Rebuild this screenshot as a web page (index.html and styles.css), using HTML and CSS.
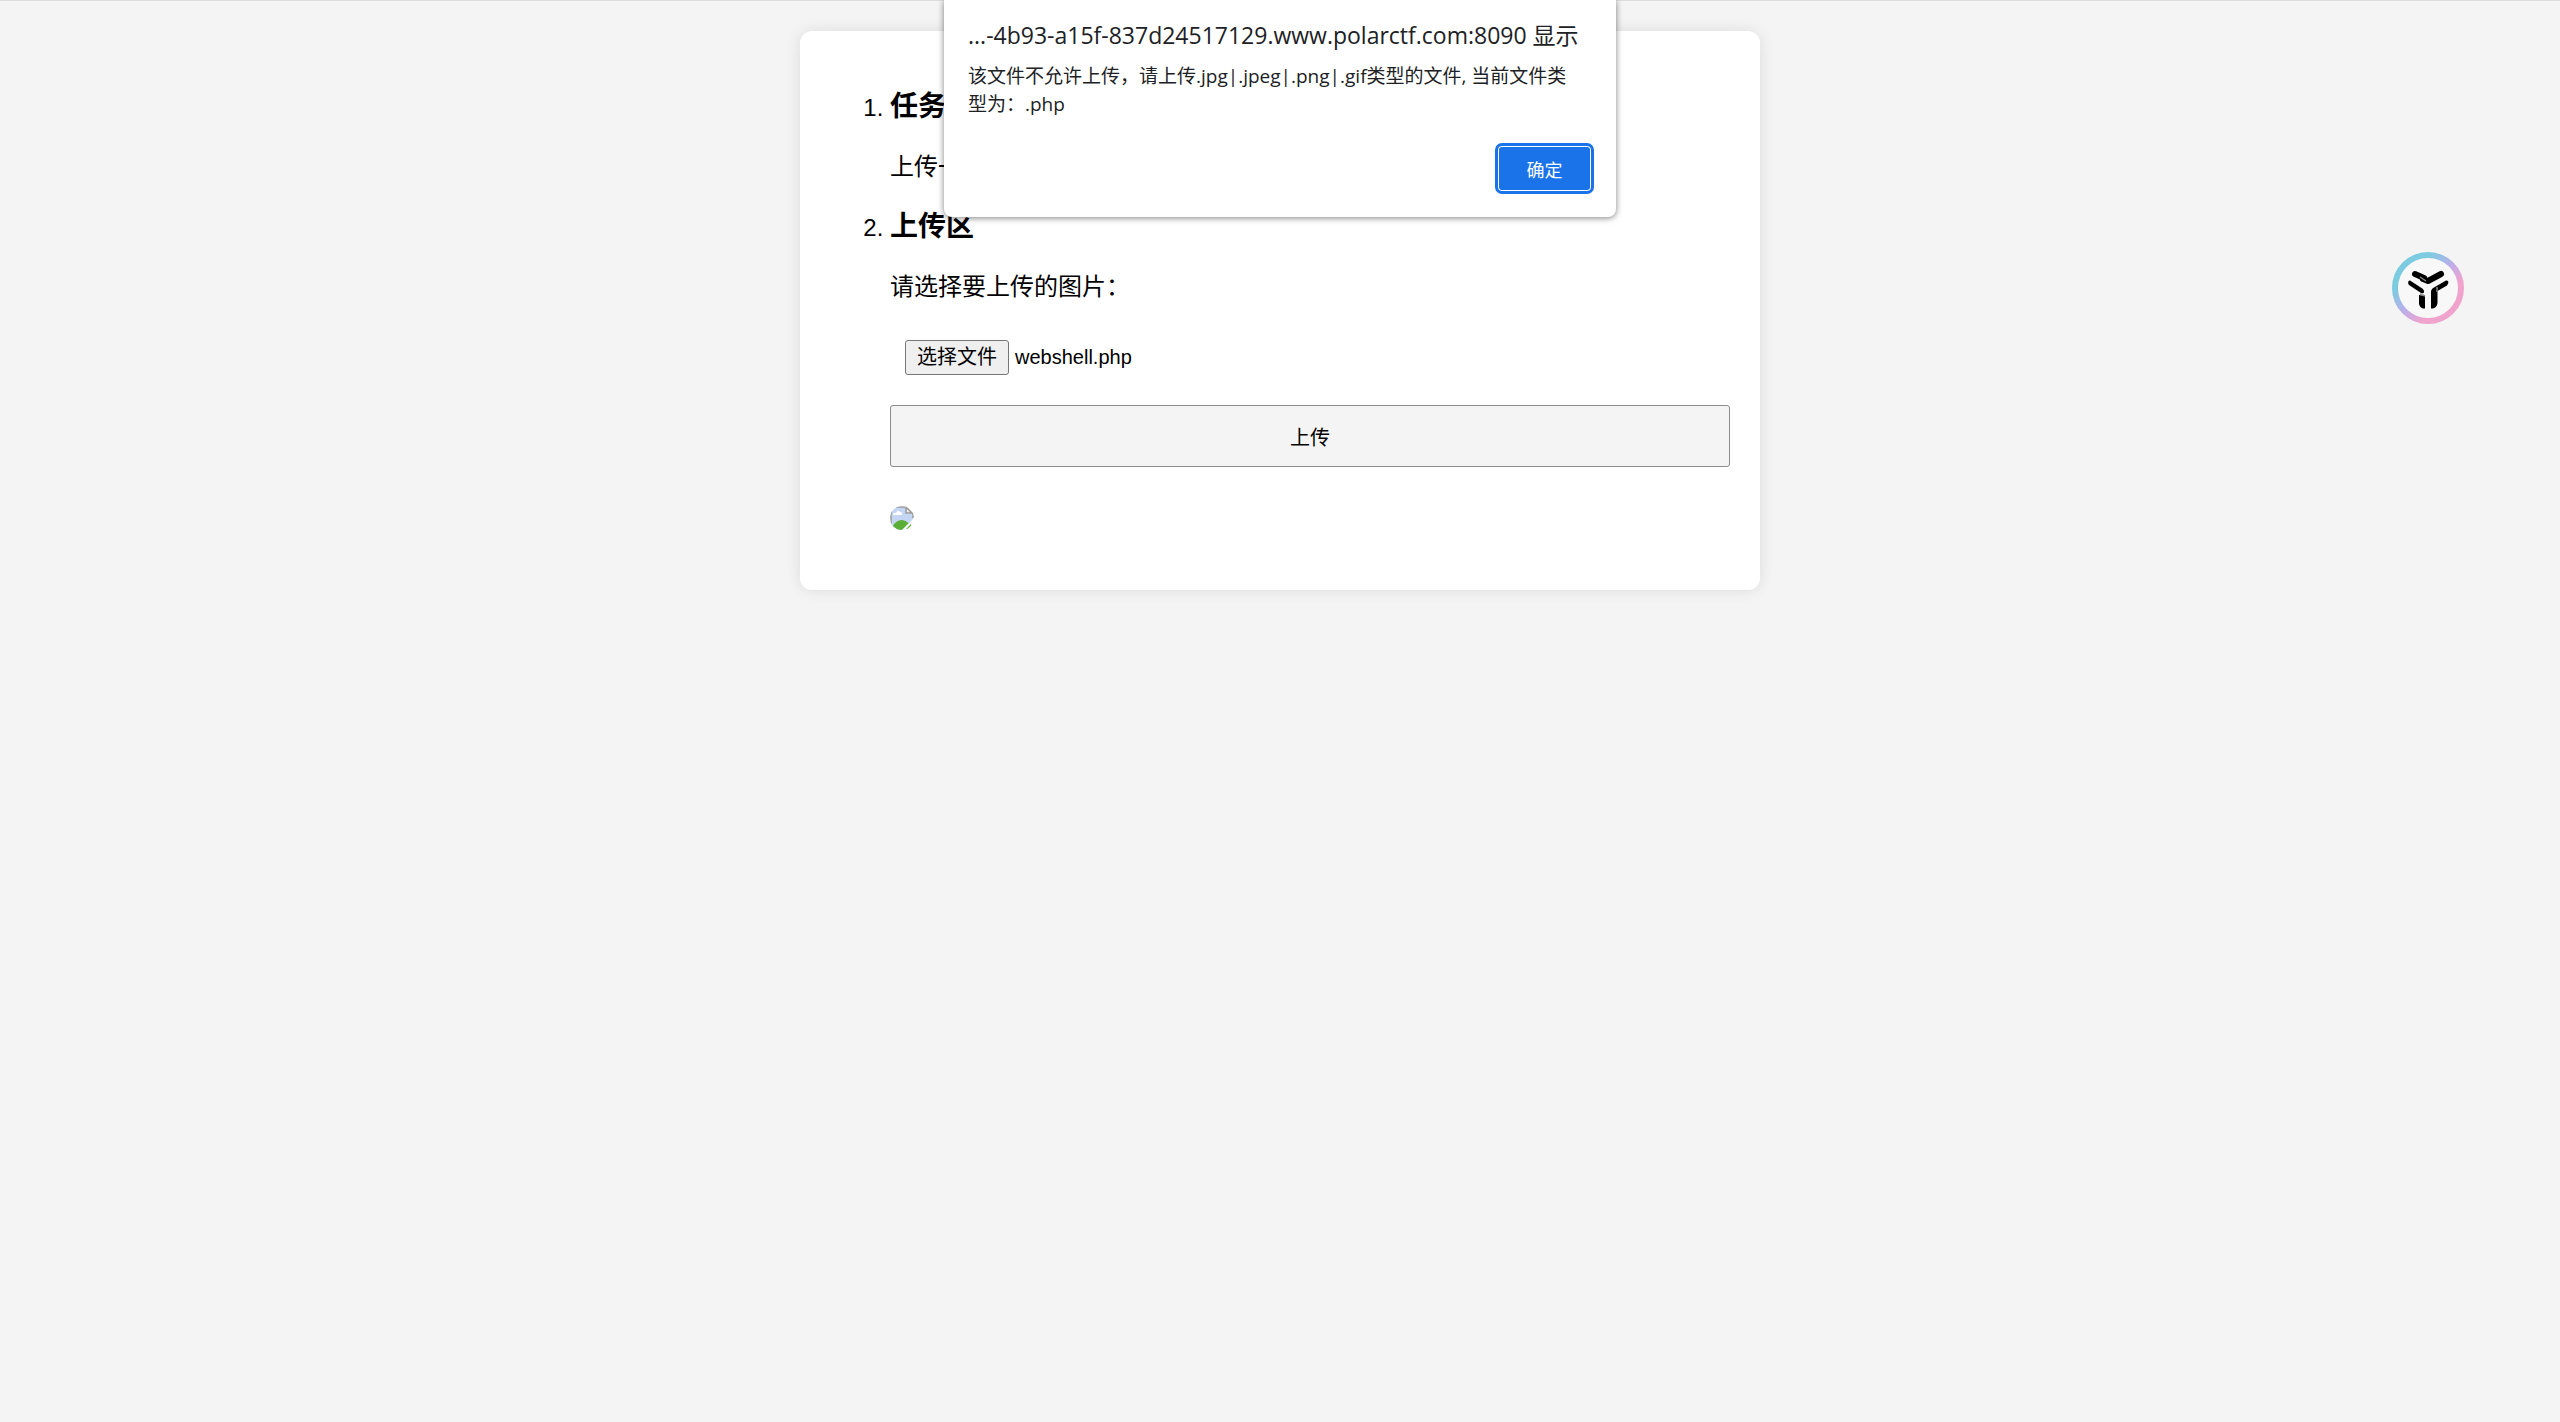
FILE: index.html
```
<!DOCTYPE html>
<html lang="zh-CN">
<head>
    <meta charset="UTF-8">
    <meta name="viewport" content="width=device-width, initial-scale=1.0">
    <title>文件上传</title>
    <link rel="stylesheet" href="styles.css">
</head>
<body>
    <div class="container">
        <ol class="tasks">
            <li>
                <h3>任务</h3>
                <p>上传一个文件</p>
            </li>
            <li>
                <h3>上传区</h3>
                <form onsubmit="return checkFile()">
                    <p><label for="upload">请选择要上传的图片：</label></p>
                    <div class="file-row">
                        <input class="hidden" type="file" id="upload" onchange="showName()">
                        <button class="choose" type="button" onclick="chooseFile()">选择文件</button>
                        <span id="fileName">webshell.php</span>
                    </div>
                    <button class="submit" type="submit">上传</button>
                </form>
                <svg class="preview" viewBox="0 0 24 24" role="img" aria-label="图片">
                    <clipPath id="round"><circle cx="12" cy="12" r="12"/></clipPath>
                    <g clip-path="url(#round)">
                        <path d="M1 1H16L23 8V24H1Z" fill="#c5d6f5"/>
                        <path d="M3 9Q3 6 6 7Q8 3 10 6Q13 6 12 9Z" fill="#fff"/>
                        <path d="M1 24Q4 15 11 14Q16 14 19 18L12 24Z" fill="#5bae38"/>
                        <path d="M24 12L12 24H17L24 17Z" fill="#fff"/>
                        <path d="M15 24L24 16V24Z" fill="#fff"/>
                        <path d="M16 23L21 18V20L18 23Z" fill="#5bae38"/>
                        <path d="M16 1L23 8H16Z" fill="#f2f2f2"/>
                        <path d="M1 24V1H16L23 8V12M16 1V7H22" fill="none" stroke="#999" stroke-width="1.5"/>
                    </g>
                </svg>
            </li>
        </ol>
    </div>

    <div class="dialog" id="dialog" role="alertdialog" aria-labelledby="dialogTitle">
        <h2 id="dialogTitle">...-4b93-a15f-837d24517129.www.polarctf.com:8090 显示</h2>
        <p>该文件不允许上传，请上传.jpg|.jpeg|.png|.gif类型的文件, 当前文件类<br>型为：.php</p>
        <button class="ok" onclick="closeDialog()">确定</button>
    </div>

    <button class="floating" aria-label="助手">
        <svg viewBox="0 0 72 72">
            <defs>
                <linearGradient id="ring" x1="0.1" y1="0.1" x2="0.9" y2="0.9">
                    <stop offset="0.2" stop-color="#7ccbe0"/>
                    <stop offset="0.5" stop-color="#bdaeea"/>
                    <stop offset="0.75" stop-color="#efa3cd"/>
                </linearGradient>
            </defs>
            <circle cx="36" cy="36" r="33" fill="#f8f8f8" stroke="url(#ring)" stroke-width="6"/>
            <path d="M23 22L32 26" stroke="#000" stroke-width="6" stroke-linecap="round"/>
            <path d="M31 27L36 29L49 22" fill="none" stroke="#000" stroke-width="6" stroke-linecap="round" stroke-linejoin="round"/>
            <path d="M18 28.500C16 28.500 15.500 31 17 33L29 41C32 42 33 40 31 37Z"/>
            <path d="M27 43L33 44V56.500C30 57 27 54.500 27 51Z"/>
            <path d="M54 28.500C57 28.500 57 31 55 33.500L45.500 39V51C45 55 42 57 39 56.500V40C39 38 40 36.500 42 35.500Z"/>
            <path d="M28 25L34 29M45 35V40M28 42L33 44" stroke="#888" stroke-width="1.500"/>
        </svg>
    </button>

    <script>
        function chooseFile() {
            document.getElementById('upload').click();
        }
        function showName() {
            const files = document.getElementById('upload').files;
            if (files.length > 0) {
                document.getElementById('fileName').textContent = files[0].name;
            }
        }
        function checkFile() {
            const name = document.getElementById('fileName').textContent;
            if (!/\.(jpg|jpeg|png|gif)$/.test(name)) {
                document.getElementById('dialog').classList.remove('hidden');
            }
            return false;
        }
        function closeDialog() {
            document.getElementById('dialog').classList.add('hidden');
        }
    </script>
</body>
</html>
```
FILE: styles.css
```
* {
    box-sizing: border-box;
}
body {
    font-family: "Liberation Sans", "Noto Sans CJK SC", sans-serif;
    font-size: 24px;
    line-height: 36px;
    color: #000;
    background-color: #f4f4f4;
    margin: 0;
    border-top: 1px solid #ddd;
}
button {
    font-family: inherit;
    font-size: 20px;
    color: #000;
    cursor: pointer;
}
.container {
    max-width: 960px;
    margin: 30px auto;
    padding: 56px 30px 54px;
    background-color: #fff;
    border-radius: 12px;
    box-shadow: 0 0 15px rgba(0, 0, 0, 0.1);
}
.tasks {
    margin: 0;
    padding-left: 60px;
}
.tasks h3 {
    margin: 0 0 22px;
    font-size: 28px;
    line-height: 40px;
}
.tasks p {
    margin: 0 0 22px;
}
.file-row {
    display: flex;
    align-items: center;
    gap: 6px;
    margin-bottom: 30px;
    padding: 12px 15px 0;
    font-size: 20px;
}
.choose {
    height: 35px;
    padding: 0 11px;
    line-height: 30px;
    background-color: #efefef;
    border: 1px solid #767676;
    border-radius: 3px;
}
.submit {
    display: block;
    width: 100%;
    height: 62px;
    background-color: #f4f4f4;
    border: 1px solid #8c8c8c;
    border-radius: 3px;
}
.preview {
    display: block;
    width: 24px;
    height: 24px;
    margin-top: 39px;
    margin-bottom: 6px;
}

/* alert box */
.dialog {
    position: absolute;
    top: 0;
    left: 50%;
    width: 672px;
    margin-left: -336px;
    padding: 17px 25px 26px 24px;
    font-family: "Open Sans", "Noto Sans CJK SC", sans-serif;
    color: #202124;
    background-color: #fff;
    border-radius: 0 0 8px 8px;
    box-shadow: 0 1px 6px rgba(0, 0, 0, 0.5);
    white-space: nowrap;
}
.dialog h2 {
    margin: 0 0 9px;
    font-size: 23px;
    font-weight: normal;
    line-height: 36px;
}
.dialog p {
    margin: 0 0 28px;
    font-size: 19px;
    line-height: 28px;
}
.ok {
    display: block;
    width: 93px;
    height: 45px;
    margin-left: auto;
    font-size: 18px;
    color: #fff;
    background-color: #1a73e8;
    border: none;
    border-radius: 4px;
    outline: 3px solid #1a73e8;
    box-shadow: inset 0 0 0 1px #fff;
}
.hidden {
    display: none;
}

.floating {
    position: fixed;
    top: 252px;
    right: 96px;
    width: 72px;
    height: 72px;
    padding: 0;
    background: none;
    border: none;
}
.floating svg {
    display: block;
}
```
